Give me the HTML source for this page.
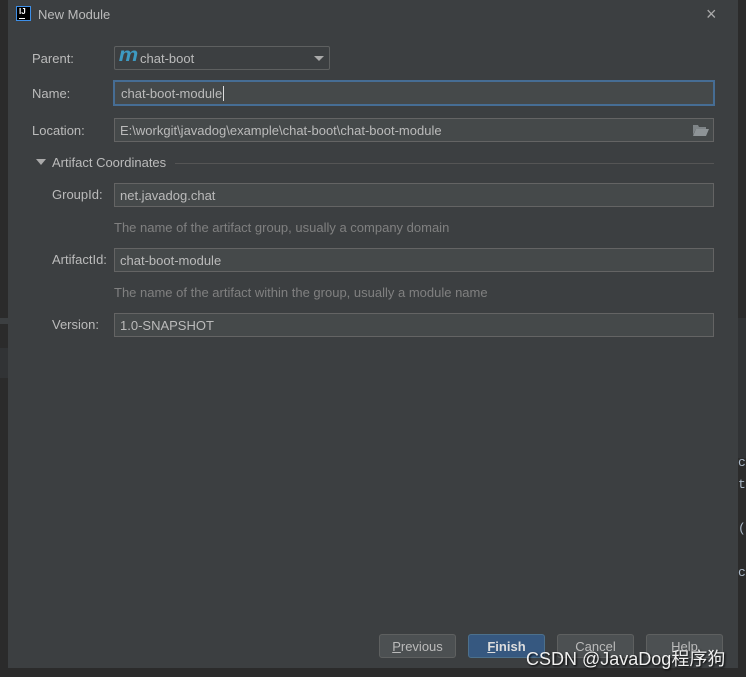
<!DOCTYPE html>
<html><head><style>
*{margin:0;padding:0;box-sizing:border-box}
body{width:746px;height:677px;background:#2b2b2b;font-family:"Liberation Sans","Noto Sans CJK SC",sans-serif;font-size:13px;color:#bbbbbb;position:relative;overflow:hidden}
.dlg{position:absolute;left:8px;top:0;width:730px;height:668px;background:#3c3f41}
.a{position:absolute}
.lbl{position:absolute;font-size:13px;color:#bbbbbb}
.fld{position:absolute;background:#45494a;border:1px solid #646464;height:24px;padding-left:5px;line-height:23px;color:#bbbbbb}
.hint{position:absolute;color:#808080;font-size:13px}
.btn{position:absolute;top:634px;width:77px;height:24px;border:1px solid #5e6060;background:#4c5052;border-radius:3px;text-align:center;line-height:23px;color:#bbbbbb}
</style></head><body>
<div class="a" style="left:0;top:318px;width:8px;height:6px;background:#3c3f41"></div>
<div class="a" style="left:0;top:348px;width:8px;height:30px;background:#313335"></div>
<div class="a" style="left:738px;top:318px;width:8px;height:140px;background:#313335"></div>
<div class="a" style="left:738px;top:452px;color:#a9b7c6;font-family:'Liberation Mono',monospace;font-size:13px;line-height:22px">c<br>t<br><br>(<br><br>c</div>
<div class="dlg">
 <div class="a" style="left:8px;top:6px;width:15px;height:15px;background:#000;border:1px solid #3d8fe8;color:#fff;font-size:8px;font-weight:bold;line-height:9px;padding-left:2px">IJ<div style="width:6px;height:1px;background:#fff;margin-top:2px"></div></div>
 <div class="a" style="left:30px;top:7px;color:#bbbbbb">New Module</div>
 <div class="a" style="left:698px;top:4px;color:#aaa;font-size:18px">×</div>
 <div class="lbl" style="left:24px;top:51px">Parent:</div>
 <div class="a" style="left:106px;top:46px;width:216px;height:24px;border:1px solid #5e6060;background:#3c3f41;border-radius:2px"></div>
 <div class="a" style="left:112px;top:45px;color:#3d9ac2;font-weight:bold;font-style:italic;font-size:19px;transform:scaleX(1.15)">m</div>
 <div class="a" style="left:132px;top:51px">chat-boot</div>
 <div class="a" style="left:306px;top:56px;border-left:5px solid transparent;border-right:5px solid transparent;border-top:5px solid #aaa"></div>
 <div class="lbl" style="left:24px;top:86px">Name:</div>
 <div class="fld" style="left:105px;top:80px;width:602px;height:26px;border:2px solid #466d94;line-height:23px;padding-left:6px">chat-boot-module<span style="border-left:1px solid #ddd;margin-left:1px"></span></div>
 <div class="lbl" style="left:24px;top:123px">Location:</div>
 <div class="fld" style="left:106px;top:118px;width:600px">E:\workgit\javadog\example\chat-boot\chat-boot-module</div>
 <svg class="a" style="left:685px;top:124px" width="16" height="12" viewBox="0 0 16 12"><path d="M0 1h5l1 2h7v2H3L0 11z" fill="#7f8588"/><path d="M3 5h13l-3 7H0z" fill="#8e9497"/></svg>
 <div class="a" style="left:28px;top:159px;border-left:5px solid transparent;border-right:5px solid transparent;border-top:6px solid #aaa"></div>
 <div class="lbl" style="left:44px;top:155px">Artifact Coordinates</div>
 <div class="a" style="left:167px;top:163px;width:539px;height:1px;background:#555"></div>
 <div class="lbl" style="left:44px;top:187px">GroupId:</div>
 <div class="fld" style="left:106px;top:183px;width:600px">net.javadog.chat</div>
 <div class="hint" style="left:106px;top:220px">The name of the artifact group, usually a company domain</div>
 <div class="lbl" style="left:44px;top:252px">ArtifactId:</div>
 <div class="fld" style="left:106px;top:248px;width:600px">chat-boot-module</div>
 <div class="hint" style="left:106px;top:285px">The name of the artifact within the group, usually a module name</div>
 <div class="lbl" style="left:44px;top:317px">Version:</div>
 <div class="fld" style="left:106px;top:313px;width:600px">1.0-SNAPSHOT</div>
 <div class="btn" style="left:371px"><u>P</u>revious</div>
 <div class="btn" style="left:460px;background:#365880;border-color:#4c708c;font-weight:bold;color:#ddd"><u>F</u>inish</div>
 <div class="btn" style="left:549px">Cancel</div>
 <div class="btn" style="left:638px">Help</div>
</div>
<div class="a" style="left:526px;top:645px;color:#f0f0f0;font-size:18px;text-shadow:1px 1px 2px #000">CSDN @JavaDog程序狗</div>
</body></html>
